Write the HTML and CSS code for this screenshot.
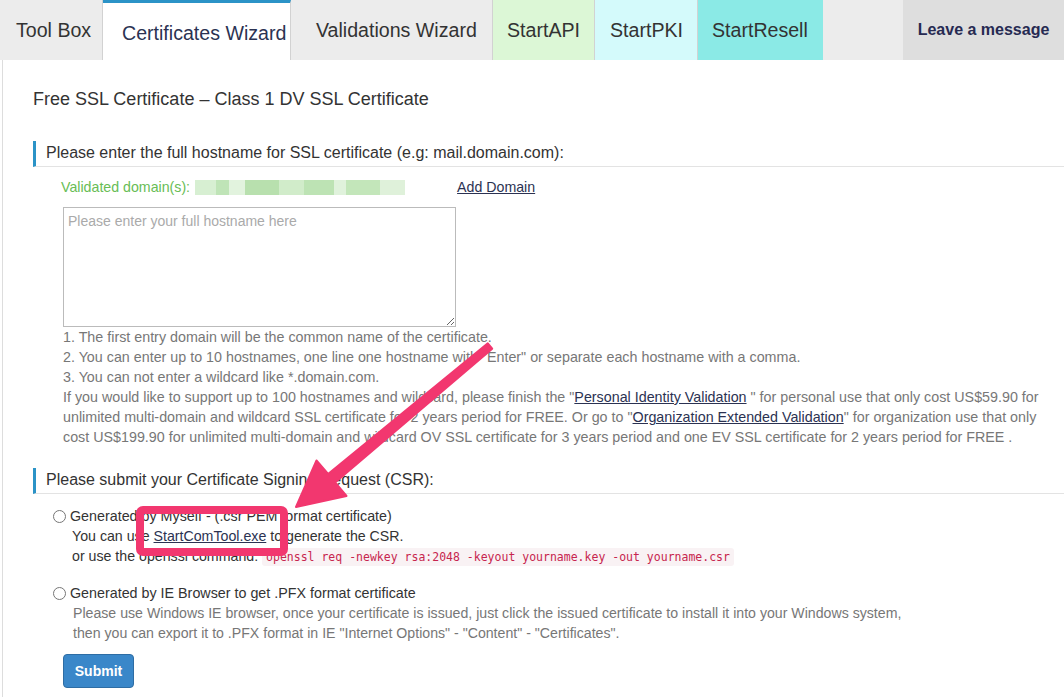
FILE: index.html
```html
<!DOCTYPE html>
<html lang="en">
<head>
    <meta charset="UTF-8">
    <title>Certificates Wizard</title>
    <link rel="stylesheet" href="styles.css">
</head>
<body>
    <nav class="tabs">
        <a class="tab tab-toolbox">Tool Box</a>
        <a class="tab tab-cert active">Certificates Wizard</a>
        <a class="tab tab-valid">Validations Wizard</a>
        <a class="tab tab-api">StartAPI</a>
        <a class="tab tab-pki">StartPKI</a>
        <a class="tab tab-resell">StartResell</a>
        <a class="tab-message">Leave a message</a>
    </nav>

    <div class="page">
        <h2 class="page-title">Free SSL Certificate &ndash; Class 1 DV SSL Certificate</h2>

        <div class="section-head">Please enter the full hostname for SSL certificate (e.g: mail.domain.com):</div>
        <div class="section-body">
            <div class="domain-row">
                <span class="validated">Validated domain(s):</span>
                <span class="blurred"></span>
                <a class="link" href="#">Add Domain</a>
            </div>
            <textarea class="hostnames" placeholder="Please enter your full hostname here"></textarea>
            <div class="notes">
                1. The first entry domain will be the common name of the certificate.<br>
                2. You can enter up to 10 hostnames, one line one hostname with "Enter" or separate each hostname with a comma.<br>
                3. You can not enter a wildcard like *.domain.com.<br>
                If you would like to support up to 100 hostnames and wildcard, please finish the "<a class="link" href="#">Personal Identity Validation</a> " for personal use that only cost US$59.90 for<br>
                unlimited multi-domain and wildcard SSL certificate for 2 years period for FREE. Or go to "<a class="link" href="#">Organization Extended Validation</a>" for organization use that only<br>
                cost US$199.90 for unlimited multi-domain and wildcard OV SSL certificate for 3 years period and one EV SSL certificate for 2 years period for FREE .
            </div>
        </div>

        <div class="section-head section-csr">Please submit your Certificate Signing Request (CSR):</div>
        <div class="section-body csr-body">
            <label class="option">
                <input type="radio" name="csr">
                <span>Generated by Myself - (.csr PEM format certificate)</span>
            </label>
            <div class="option-info dark">
                You can use <a class="link" href="#">StartComTool.exe</a> to generate the CSR.<br>
                or use the openssl command: <code>openssl req -newkey rsa:2048 -keyout yourname.key -out yourname.csr</code>
            </div>
            <label class="option option-ie">
                <input type="radio" name="csr">
                <span>Generated by IE Browser to get .PFX format certificate</span>
            </label>
            <div class="option-info muted">
                Please use Windows IE browser, once your certificate is issued, just click the issued certificate to install it into your Windows system,<br>
                then you can export it to .PFX format in IE "Internet Options" - "Content" - "Certificates".
            </div>
            <button class="btn-submit" type="button">Submit</button>
        </div>
    </div>

    <!-- annotation drawn over the screenshot -->
    <svg class="annotation" width="1064" height="697" viewBox="0 0 1064 697">
        <polygon points="487.8,343.3 492.2,348.7 335.1,482.4 346.5,496 296,507 316.5,460.5 328.1,474" fill="#f2376f" stroke="#f2376f" stroke-width="2" stroke-linejoin="round"/>
        <rect x="140" y="510" width="144" height="42" rx="3" fill="none" stroke="#f2376f" stroke-width="8"/>
    </svg>
</body>
</html>
```

FILE: styles.css
```css
body {
    margin: 0;
    font-family: 'Liberation Sans', Arial, sans-serif;
    color: #333;
    background-color: #fff;
    position: relative;
}
.tabs {
    display: flex;
    height: 60px;
    background-color: #ececec;
}
.tab {
    display: flex;
    align-items: center;
    font-size: 19.6px;
    color: #333;
    border-right: 1px solid #d2d2d2;
    box-sizing: border-box;
}
.tab-toolbox { width: 103px; padding-left: 16px; }
.tab-cert { width: 188px; padding-left: 19px; }
.tab-valid { width: 202px; padding-left: 25px; }
.tab-api { width: 102px; padding-left: 14px; background-color: #dcf7d6; }
.tab-pki { width: 103px; padding-left: 15px; background-color: #d4fafb; }
.tab-resell { width: 125px; padding-left: 14px; background-color: #8beae6; border-right: none; }
.tab.active {
    background-color: #fff;
    border-top: 3px solid #2b93c7;
    padding-top: 3px;
    color: #2b3252;
}
.tab-message {
    margin-left: auto;
    width: 161px;
    display: flex;
    align-items: center;
    justify-content: center;
    background-color: #dedede;
    font-size: 16px;
    font-weight: bold;
    color: #262a52;
}
.page {
    margin-left: 2px;
    border-left: 1px solid #ddd;
    padding: 29px 0 10px 30px;
}
.page-title {
    margin: 0;
    font-size: 18px;
    font-weight: normal;
    line-height: 20px;
    color: #333;
}
.section-head {
    margin-top: 32px;
    border-left: 3px solid #2b93c7;
    border-bottom: 1px solid #e3e3e3;
    padding: 0 0 2px 10px;
    font-size: 16px;
    line-height: 23px;
}
.section-body {
    padding-left: 28px;
}
.domain-row {
    display: flex;
    align-items: center;
    height: 22px;
    margin-top: 9px;
    font-size: 14.2px;
}
.validated {
    color: #68bd55;
}
.blurred {
    width: 210px;
    height: 15px;
    margin: 0 52px 0 5px;
    background: linear-gradient(90deg, #d7efd2 0 10%, #bfe4b7 10% 16%, #e2f3de 16% 24%, #b8e0ae 24% 40%, #d1ecca 40% 52%, #bde3b4 52% 66%, #e0f2dc 66% 72%, #c3e6ba 72% 88%, #dff1da 88% 100%);
}
.link {
    color: #2b3252;
    text-decoration: underline;
}
.hostnames {
    display: block;
    width: 393px;
    height: 120px;
    margin: 9px 0 0 2px;
    padding: 5px 4px;
    box-sizing: border-box;
    border: 1px solid #bbb;
    font-family: 'Liberation Sans', Arial, sans-serif;
    font-size: 14px;
}
.hostnames::placeholder {
    color: #aaa;
}
.notes {
    margin-left: 2px;
    font-size: 14.3px;
    line-height: 20px;
    color: #777;
}
.section-csr {
    margin-top: 21px;
}
.csr-body {
    padding-left: 20px;
    padding-top: 12px;
}
.option {
    display: flex;
    align-items: center;
    height: 20px;
    font-size: 14.3px;
    color: #333;
}
.option input {
    width: 13px;
    height: 13px;
    margin: 0 4px 0 0;
    accent-color: #999;
}
.option-ie {
    margin-top: 16px;
}
.option-info {
    padding-left: 19px;
    font-size: 14.2px;
    line-height: 20px;
}
.option-info.dark { color: #333; }
.option-info.muted { color: #777; padding-left: 20px; font-size: 14.15px; }
code {
    font-family: 'DejaVu Sans Mono', monospace;
    font-size: 11.5px;
    color: #c7254e;
    background-color: #f9f2f4;
    padding: 2px 4px;
    border-radius: 3px;
}
.btn-submit {
    margin: 11px 0 0 10px;
    width: 71px;
    height: 34px;
    background-color: #3a87c9;
    border: 1px solid #2e6da4;
    border-radius: 4px;
    color: #fff;
    font-family: 'Liberation Sans', Arial, sans-serif;
    font-size: 14px;
    font-weight: bold;
}
.annotation {
    position: absolute;
    left: 0;
    top: 0;
    pointer-events: none;
}
```
